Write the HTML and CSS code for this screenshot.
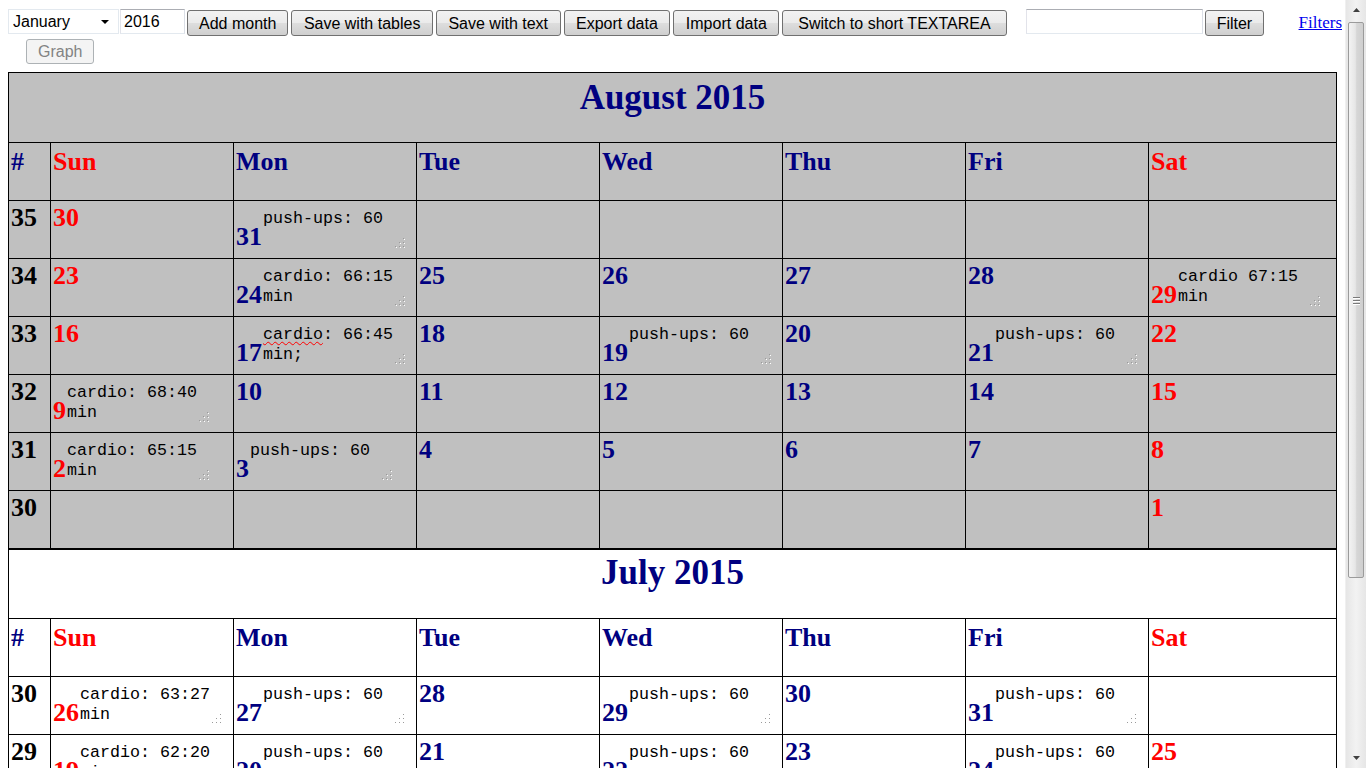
FILE: index.html
```html
<!DOCTYPE html>
<html>
<head>
<meta charset="utf-8">
<title>Calendar</title>
<link rel="stylesheet" href="styles.css">
</head>
<body>
<div class="app">
  <div class="page">
    <div class="toolbar">
      <div class="select-wrap">
        <select class="month-select"><option>January</option></select>
        <svg class="select-arrow" width="8" height="4" viewBox="0 0 8 4"><path d="M0 0H8L4 4Z" fill="#000"/></svg>
      </div>
      <input class="year" type="text" value="2016">
      <button class="btn first">Add month</button>
      <button class="btn">Save with tables</button>
      <button class="btn">Save with text</button>
      <button class="btn">Export data</button>
      <button class="btn">Import data</button>
      <button class="btn wide">Switch to short TEXTAREA</button>
      <input class="filter-input" type="text">
      <button class="btn filter-btn">Filter</button>
      <a class="filters-link" href="#">Filters</a>
    </div>
    <div class="toolbar2">
      <button class="btn graph" disabled>Graph</button>
    </div>

    <table class="month grey">
      <colgroup><col class="c-wk"><col class="c-day"><col class="c-day"><col class="c-day"><col class="c-day"><col class="c-day"><col class="c-day"><col></colgroup>
      <tr class="title-row"><th colspan="8" class="title">August 2015</th></tr>
      <tr class="head-row"><th>#</th><th class="we">Sun</th><th>Mon</th><th>Tue</th><th>Wed</th><th>Thu</th><th>Fri</th><th class="we">Sat</th></tr>
      <tr><td class="wk">35</td><td class="we">30</td><td>31<span class="note">push-ups: 60</span></td><td></td><td></td><td></td><td></td><td class="we"></td></tr>
      <tr><td class="wk">34</td><td class="we">23</td><td>24<span class="note">cardio: 66:15<br>min</span></td><td>25</td><td>26</td><td>27</td><td>28</td><td class="we">29<span class="note">cardio 67:15<br>min</span></td></tr>
      <tr><td class="wk">33</td><td class="we">16</td><td>17<span class="note"><span class="spell">cardio</span>: 66:45<br>min;</span></td><td>18</td><td>19<span class="note">push-ups: 60</span></td><td>20</td><td>21<span class="note">push-ups: 60</span></td><td class="we">22</td></tr>
      <tr><td class="wk">32</td><td class="we">9<span class="note">cardio: 68:40<br>min</span></td><td>10</td><td>11</td><td>12</td><td>13</td><td>14</td><td class="we">15</td></tr>
      <tr><td class="wk">31</td><td class="we">2<span class="note">cardio: 65:15<br>min</span></td><td>3<span class="note">push-ups: 60</span></td><td>4</td><td>5</td><td>6</td><td>7</td><td class="we">8</td></tr>
      <tr><td class="wk">30</td><td class="we"></td><td></td><td></td><td></td><td></td><td></td><td class="we">1</td></tr>
    </table>

    <table class="month">
      <colgroup><col class="c-wk"><col class="c-day"><col class="c-day"><col class="c-day"><col class="c-day"><col class="c-day"><col class="c-day"><col></colgroup>
      <tr class="title-row"><th colspan="8" class="title">July 2015</th></tr>
      <tr class="head-row"><th>#</th><th class="we">Sun</th><th>Mon</th><th>Tue</th><th>Wed</th><th>Thu</th><th>Fri</th><th class="we">Sat</th></tr>
      <tr><td class="wk">30</td><td class="we">26<span class="note">cardio: 63:27<br>min</span></td><td>27<span class="note">push-ups: 60</span></td><td>28</td><td>29<span class="note">push-ups: 60</span></td><td>30</td><td>31<span class="note">push-ups: 60</span></td><td class="we"></td></tr>
      <tr><td class="wk">29</td><td class="we">19<span class="note">cardio: 62:20<br>min</span></td><td>20<span class="note">push-ups: 60</span></td><td>21</td><td>22<span class="note">push-ups: 60</span></td><td>23</td><td>24<span class="note">push-ups: 60</span></td><td class="we">25</td></tr>
      <tr><td class="wk">28</td><td class="we">12</td><td>13</td><td>14</td><td>15</td><td>16</td><td>17</td><td class="we">18</td></tr>
      <tr><td class="wk">27</td><td class="we">5</td><td>6</td><td>7</td><td>8</td><td>9</td><td>10</td><td class="we">11</td></tr>
    </table>
  </div>
  <div class="scrollbar">
    <div class="sb-btn"><svg width="7" height="4" viewBox="0 0 7 4"><path d="M0 4H7L3.5 0Z" fill="#404040"/></svg></div>
    <div class="sb-thumb"><span class="sb-grip"></span></div>
    <div class="sb-track"></div>
    <div class="sb-btn"><svg width="7" height="4" viewBox="0 0 7 4"><path d="M0 0H7L3.5 4Z" fill="#404040"/></svg></div>
  </div>
</div>
</body>
</html>
```

FILE: styles.css
```css
html, body {
  margin: 0;
  height: 100%;
  overflow: hidden;
  background: #fff;
}

.app {
  display: flex;
  height: 100vh;
}

.page {
  flex: 1;
  min-width: 0;
  padding: 8px;
  overflow: hidden;
}

/* ---------- toolbar ---------- */
.toolbar {
  display: flex;
  align-items: flex-start;
  margin-top: 1px;
  height: 27px;
}

.select-wrap {
  position: relative;
  width: 111px;
  height: 25px;
}

.month-select {
  appearance: none;
  -webkit-appearance: none;
  width: 111px;
  height: 25px;
  margin: 0;
  padding: 0 0 0 4px;
  border: 1px solid #e3e9ef;
  border-radius: 0;
  background: #fff;
  font: 16px "Liberation Sans", Arial, sans-serif;
  color: #000;
}

.select-arrow {
  position: absolute;
  right: 10px;
  top: 11px;
}

.year, .filter-input {
  box-sizing: border-box;
  height: 25px;
  margin: 0 0 0 1px;
  padding: 0 3px;
  border: 1px solid;
  border-color: #abadb3 #dbdfe6 #e3e9ef #e2e3ea;
  font: 16px "Liberation Sans", Arial, sans-serif;
  color: #000;
  background: #fff;
}

.year {
  width: 65px;
}

.filter-input {
  width: 177px;
  margin-left: 19px;
}

.btn {
  box-sizing: border-box;
  height: 26px;
  margin: 1px 0 0 3px;
  padding: 1px 11.5px 0;
  border: 1px solid #707070;
  border-radius: 3px;
  background: linear-gradient(#f2f2f2 0%, #ebebeb 48%, #dddddd 52%, #cfcfcf 100%);
  font: 16px "Liberation Sans", Arial, sans-serif;
  color: #000;
  white-space: nowrap;
}

.btn.first {
  margin-left: 2px;
  padding-left: 11px;
  padding-right: 11px;
}

.btn.wide {
  padding-left: 15px;
  padding-right: 15px;
}

.btn.filter-btn {
  margin-left: 2px;
  padding-left: 11px;
  padding-right: 11px;
}

.filters-link {
  margin-left: auto;
  margin-right: -5px;
  margin-top: 4px;
  font: 17px "Liberation Serif", "Times New Roman", serif;
  color: #0000ee;
  text-decoration: underline;
}

.toolbar2 {
  display: flex;
  margin-top: 3px;
}

.btn.graph {
  height: 25px;
  margin: 0 0 0 18px;
  padding: 0 11px;
  border-color: #adb2b5;
  background: #f4f4f4;
  color: #838383;
}

/* ---------- calendar tables ---------- */
.month {
  width: 100%;
  border-collapse: collapse;
  table-layout: fixed;
  border: 1px solid #000;
  font-family: "Liberation Serif", "Times New Roman", serif;
  font-weight: bold;
  font-size: 26px;
  color: #000080;
  background: #fff;
}

.toolbar2 + .month {
  margin-top: 8px;
}

.month.grey {
  background: #c0c0c0;
}

.c-wk { width: 42px; }
.c-day { width: 183px; }

.month th, .month td {
  border: 1px solid #000;
  padding: 2px;
  vertical-align: top;
  text-align: left;
  white-space: nowrap;
  overflow: visible;
}

.month tr { height: 58px; }
.month .title-row { height: 70px; }
.month + .month .title-row { height: 69px; }

.month th.title {
  text-align: center;
  font-size: 35px;
  padding-top: 5px;
}

.month + .month th.title {
  padding-top: 3px;
}

.head-row th {
  padding-top: 4px;
}

.month .we { color: #ff0000; }
.month .wk { color: #000; }

.note {
  display: inline-block;
  position: relative;
  box-sizing: border-box;
  width: 145px;
  height: 44px;
  margin-top: 4px;
  padding: 2px 2px 2px 1px;
  vertical-align: -6px;
  overflow: hidden;
  font: normal 16.67px/20px "Liberation Mono", "Courier New", monospace;
  color: #000;
  white-space: pre;
}

.note::after {
  content: "";
  position: absolute;
  right: 3px;
  bottom: 4px;
  width: 1px;
  height: 1px;
  background: #9a9a9a;
  box-shadow:
    -4px 0 #9a9a9a, -8px 0 #9a9a9a,
    0 -4px #9a9a9a, -4px -4px #9a9a9a,
    0 -8px #9a9a9a,
    1px 1px #fff, -3px 1px #fff, -7px 1px #fff,
    1px -3px #fff, -3px -3px #fff, 1px -7px #fff;
}

.spell {
  text-decoration: underline wavy #ff0000;
  text-decoration-thickness: 1px;
  text-underline-offset: 2px;
  text-decoration-skip-ink: none;
}

/* ---------- scrollbar ---------- */
.scrollbar {
  flex: none;
  width: 21px;
  box-sizing: border-box;
  padding: 0 2px;
  display: flex;
  flex-direction: column;
  background: linear-gradient(90deg, #e6e6e6, #f2f2f2 50%, #e6e6e6);
  border-left: 1px solid #f0f0f0;
}

.sb-btn {
  height: 20px;
  display: flex;
  align-items: center;
  justify-content: center;
}

.sb-thumb {
  height: 556px;
  margin-top: 2px;
  box-sizing: border-box;
  border: 1px solid #9b9b9b;
  border-radius: 2px;
  background: linear-gradient(90deg, #f3f3f3, #e6e6e6 45%, #d6d6d6 55%, #cfcfcf);
  display: flex;
  align-items: center;
  justify-content: center;
}

.sb-grip {
  width: 7px;
  height: 1px;
  background: #7a7a7a;
  box-shadow: 0 -3px #7a7a7a, 0 3px #7a7a7a, 0 -2px #fff, 0 1px #fff, 0 4px #fff;
}

.sb-track {
  flex: 1;
}
```
